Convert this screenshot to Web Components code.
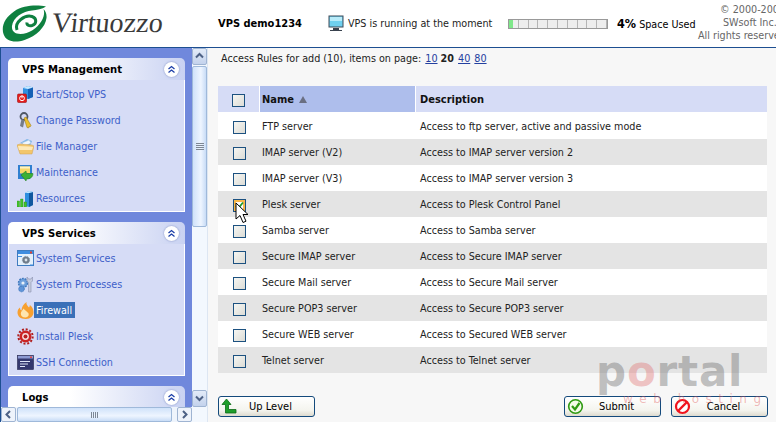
<!DOCTYPE html>
<html>
<head>
<meta charset="utf-8">
<title>Virtuozzo</title>
<style>
  html, body { margin: 0; height: 100%; overflow: hidden; background: #fff; }
  body { width: 776px; height: 422px; font: 10.7px "DejaVu Sans Condensed", "Liberation Sans", sans-serif; color: #000; }
</style>
</head>
<body>
<vz-app></vz-app>
<script>
const ICONS = {
  power: `<path d="M6 2l5-2 5 1.500V11l-5 2-5-1z" fill="#2f8fe0"/><path d="M11 2.500l5-1V11l-5 2z" fill="#1560b5"/><path d="M6 2l5-2 5 1.500-5 1.500z" fill="#c7e8ff"/><rect x=".5" y="8" width="9" height="8.500" rx="1" fill="#e41c1c" stroke="#a01010" stroke-width=".6"/><circle cx="5" cy="12.300" r="2.400" fill="none" stroke="#fff"/><path d="M5 9.500v2.800" stroke="#fff"/>`,
  keys: `<circle cx="7" cy="4.500" r="3.500" fill="none" stroke="#4f5866" stroke-width="1.800"/><path d="M4.500 7L3 14l3 1.500 1.500-7z" fill="#767d88"/><path d="M7 6l2-1 5 8.500-1 1.500-1-.5-.5 1.500-1.500-.5z" fill="#eabf2e" stroke="#94700e" stroke-width=".5"/>`,
  folder: `<path d="M3 5l7-4 5 2-2 5z" fill="#7fb6e8"/><path d="M5 5l7-3 2 3-6 3z" fill="#eef6ff" stroke="#a8c4dc" stroke-width=".5"/><path d="M0 7l3-1 12 1 2 1-2 8H3z" fill="#f2c66c" stroke="#d0a050" stroke-width=".5"/><path d="M1 8l12 .5 3 .5-1 3H2z" fill="#fde9b8"/>`,
  maint: `<path d="M1 1h14v10l-2 4H1z" fill="#2f7fd0"/><path d="M3 2.500h10v7H3z" fill="#f7d868"/><path d="M3 2.500h10v2H3z" fill="#fff3c0"/><path d="M4 11l5-4 .5 2.500H16c0 3-2 5.500-6.500 5.500l-.5 2z" fill="#3cb035" stroke="#1b7a1b" stroke-width=".5"/>`,
  chart: `<path d="M8 3l4-2 4 1v13l-4 2-4-1z" fill="#2f8fe0"/><path d="M12 3l4-1v13l-4 2z" fill="#10589f"/><path d="M8 3l4-2 4 1-4 1z" fill="#c7e8ff"/><path d="M0 11h2.500v6H0zM3.500 9H6v8H3.500zM7 12h2.500v5H7z" fill="#43c22c" stroke="#2a9018" stroke-width=".4"/>`,
  window: `<rect x=".5" y=".5" width="16" height="15" fill="#e4f0fb" stroke="#3f7cc0"/><rect x="1" y="1" width="15" height="3" fill="#3f8de0"/><rect x="13" y="1.500" width="2" height="2" fill="#e04030"/><circle cx="9" cy="10" r="3.600" fill="#6f7c8a" stroke="#8a97a5" stroke-dasharray="1.500 1"/><circle cx="9" cy="10" r="1.400" fill="#dde4ea"/><path d="M1 6.500h4M13 15h3" stroke="#3f8de0"/>`,
  procs: `<circle cx="6" cy="7" r="4.500" fill="#6fa0dc" stroke="#3f78bc" stroke-width="1.500" stroke-dasharray="1.800 1"/><circle cx="6" cy="7" r="1.600" fill="#e8f0f8"/><circle cx="4.500" cy="13" r="2.800" fill="#5f94d8" stroke="#3f78bc" stroke-dasharray="1.200 .8"/><path d="M10 1v4l1.500 1.500V16h2.500V6.500L15.500 5V1L14 3h-2.500z" fill="#c5cbdd" stroke="#8990b0" stroke-width=".6"/>`,
  flame: `<path d="M8.500 17c-5 0-8-2.800-8-6.500 0-2.300 1-4 2.500-5 0 1.500.5 2.500 1.500 3C4.500 5 6.500 2 9.500 0c-.5 2.500 1 3.800 2.500 5.500.5-.5.8-1.500.8-2.500 2.200 1.500 3.700 4.300 3.700 7 0 4-3 7-7.500 7z" fill="#f7a030"/><path d="M8.500 15.500c-3 0-4.700-1.700-4.700-3.800 0-2.200 1.700-3.400 2.900-5.200.6 1.700 3.500 2.900 4.600 4.600 1.200 2.300-.4 4.400-2.800 4.400z" fill="#fde6b0"/>`,
  gear: `<circle cx="8.500" cy="8.500" r="6" fill="#cc2424"/><circle cx="8.500" cy="8.500" r="7.200" fill="none" stroke="#b01c1c" stroke-width="2" stroke-dasharray="2 1.770"/><circle cx="8.500" cy="8.500" r="3.400" fill="#f8e0e0"/><circle cx="8.500" cy="8.500" r="2" fill="#b82020"/>`,
  term: `<rect x=".5" y="1.500" width="16" height="14" fill="#34386e" stroke="#23264f" stroke-width=".6"/><rect x="1" y="2" width="15" height="2.500" fill="#8d9ad2"/><rect x="13" y="2.500" width="2" height="1.500" fill="#e04848"/><path d="M3 7.500h10M3 10h8M3 12.500h5" stroke="#dfe6f8"/>`
};

const itemTemplate = document.createElement('template');
itemTemplate.innerHTML = `
  <style>
    :host { display: flex; align-items: center; height: 26px; color: #3d5fc9; }
    svg { width: 17px; height: 17px; flex: none; margin-left: 8px; }
    span { padding: 2px 3px 0 2px; line-height: 14px; }
    :host([active]) span { background: #3a70b8; color: #fff; }
  </style>
  <svg viewBox="0 0 17 17"></svg><span><slot></slot></span>
`;
class VzItem extends HTMLElement {
  constructor() {
    super();
    this._shadowRoot = this.attachShadow({mode: 'open'});
    this._shadowRoot.appendChild(itemTemplate.content.cloneNode(true));
  }
  connectedCallback() {
    this._shadowRoot.querySelector('svg').innerHTML = ICONS[this.getAttribute('icon')];
  }
}
customElements.define('vz-item', VzItem);

const panelTemplate = document.createElement('template');
panelTemplate.innerHTML = `
  <style>
    :host { display: block; margin-bottom: 10px; flex: none; }
    .title { height: 22px; display: flex; align-items: center; justify-content: space-between; padding: 0 6px 0 14px; border-radius: 5px 5px 0 0; background: linear-gradient(90deg, #fff 35%, #c9d2f2); font-weight: bold; font-size: 11.200px; }
    #name { padding-bottom: 1px; padding-top: 1px; }
    .toggle { width: 15px; height: 15px; border-radius: 50%; background: #fff; box-shadow: 0 0 2px #7a8ac0; }
    svg { display: block; }
    .body { background: #d6dcf6; border: 1px solid #fff; border-top: 0; padding: 1px 0 0; }
  </style>
  <div class="title">
    <span id="name"></span>
    <div class="toggle"><svg width="15" height="15" viewBox="0 0 15 15"><path d="M4.500 7l3-2.500 3 2.500M4.500 10.500l3-2.500 3 2.500" fill="none" stroke="#1d3fa8" stroke-width="1.300"/></svg></div>
  </div>
  <div class="body"><slot></slot></div>
`;
class VzPanel extends HTMLElement {
  constructor() {
    super();
    this._shadowRoot = this.attachShadow({mode: 'open'});
    this._shadowRoot.appendChild(panelTemplate.content.cloneNode(true));
  }
  connectedCallback() {
    this._shadowRoot.querySelector('#name').textContent = this.getAttribute('name');
  }
}
customElements.define('vz-panel', VzPanel);

const scrollTemplate = document.createElement('template');
scrollTemplate.innerHTML = `
  <style>
    :host { display: flex; flex: none; background: #f3f8fe; gap: 1px; }
    :host([dir-v]) { flex-direction: column; width: 15px; height: 359px; }
    :host([dir-h]) { flex-direction: row; height: 15px; background: #eef4fc; }
    .btn { flex: none; width: 15px; height: 17px; box-sizing: border-box; border: 1px solid #9fb4d2; border-radius: 2px; background: linear-gradient(#e3ebf8, #c3d2ec); }
    :host([dir-h]) .btn { height: 15px; background: #eef3fb; }
    .thumb { box-sizing: border-box; border: 1px solid #9fb9da; border-radius: 2px; display: flex; align-items: center; justify-content: center; }
    :host([dir-v]) .thumb { height: 161px; background: linear-gradient(90deg, #d0e2fa, #eef5ff 60%, #c8dcf6); }
    :host([dir-h]) .thumb { width: 155px; background: linear-gradient(#d0e2fa, #eef5ff 60%, #c8dcf6); }
    .track { flex: 1; }
    svg { display: block; }
  </style>
  <div class="btn"><svg width="13" height="14" viewBox="0 0 13 14"><path id="a" fill="none" stroke="#4d6185" stroke-width="2"/></svg></div>
  <div class="thumb"><svg width="8" height="8" viewBox="0 0 8 8"><path id="g" fill="none" stroke="#7d8794"/></svg></div>
  <div class="track"></div>
  <div class="btn"><svg width="13" height="14" viewBox="0 0 13 14"><path id="b" fill="none" stroke="#4d6185" stroke-width="2"/></svg></div>
`;
class VzScrollbar extends HTMLElement {
  constructor() {
    super();
    this._shadowRoot = this.attachShadow({mode: 'open'});
    this._shadowRoot.appendChild(scrollTemplate.content.cloneNode(true));
  }
  connectedCallback() {
    const vertical = this.hasAttribute('dir-v');
    const root = this._shadowRoot;
    root.querySelector('#a').setAttribute('d', vertical ? 'M3 8.500l3.500-3.500 3.500 3.500' : 'M8 3l-3.500 3.500 3.500 3.500');
    root.querySelector('#b').setAttribute('d', vertical ? 'M3 5.500l3.500 3.500 3.500-3.500' : 'M5 3l3.500 3.500-3.500 3.500');
    root.querySelector('#g').setAttribute('d', vertical ? 'M0 .5h8M0 2.500h8M0 4.500h8M0 6.500h8' : 'M.5 1v6M2.500 1v6M4.500 1v6M6.500 1v6');
  }
}
customElements.define('vz-scrollbar', VzScrollbar);

const checkTemplate = document.createElement('template');
checkTemplate.innerHTML = `
  <style>
    :host { display: block; width: 13px; height: 13px; box-sizing: border-box; border: 1px solid #1c5180; background: linear-gradient(135deg, #f6f6f2, #dcdcd6); position: relative; }
    :host([hot]) { background: #fff; box-shadow: inset 0 0 0 2px #f8b84a; }
    svg { display: none; position: absolute; left: 1px; top: 1px; }
    :host([hot]) svg { display: block; }
  </style>
  <svg width="9" height="9" viewBox="0 0 9 9"><path d="M1 4.500l2.500 2.500L8 1.500" fill="none" stroke="#1d9a2c" stroke-width="1.800"/></svg>
`;
class VzCheck extends HTMLElement {
  constructor() {
    super();
    this._shadowRoot = this.attachShadow({mode: 'open'});
    this._shadowRoot.appendChild(checkTemplate.content.cloneNode(true));
  }
}
customElements.define('vz-check', VzCheck);

const buttonTemplate = document.createElement('template');
buttonTemplate.innerHTML = `
  <style>
    :host { display: flex; align-items: center; width: 97px; height: 21px; box-sizing: border-box; border: 1px solid #144a7c; border-radius: 3px; background: linear-gradient(#fff, #f4f4ee 70%, #dedbcf); flex: none; position: relative; }
    svg { position: absolute; left: 2px; top: 1px; }
    span { flex: 1; text-align: center; padding-left: 8px; font-size: 11px; }
  </style>
  <svg width="17" height="17" viewBox="0 0 17 17"></svg><span><slot></slot></span>
`;
const BUTTON_ICONS = {
  up: `<path d="M1 6.500L5.500 1 10 6.500H7.500V11.500H15V15H4.500V6.500z" fill="#1f9e2a" stroke="#0d6b15" stroke-width=".8"/>`,
  ok: `<circle cx="8.500" cy="8.500" r="6.800" fill="#f4fbe8" stroke="#2f9a12" stroke-width="1.600"/><path d="M5 8l3 3.500L12.500 5" fill="none" stroke="#2f9a12" stroke-width="2.200"/>`,
  no: `<circle cx="8.500" cy="8.500" r="6.500" fill="#fff" stroke="#f0141e" stroke-width="2.200"/><path d="M4 13L13 4" stroke="#f0141e" stroke-width="2.400"/>`
};
class VzButton extends HTMLElement {
  constructor() {
    super();
    this._shadowRoot = this.attachShadow({mode: 'open'});
    this._shadowRoot.appendChild(buttonTemplate.content.cloneNode(true));
  }
  connectedCallback() {
    this._shadowRoot.querySelector('svg').innerHTML = BUTTON_ICONS[this.getAttribute('icon')];
  }
}
customElements.define('vz-button', VzButton);

const headerTemplate = document.createElement('template');
headerTemplate.innerHTML = `
  <style>
    :host { display: flex; align-items: center; height: 47px; border-bottom: 1px solid #1d4f91; box-sizing: content-box; overflow: hidden; background: #fff; }
    .logo { display: flex; align-items: center; width: 218px; flex: none; padding-left: 2px; box-sizing: border-box; }
    .logo svg { flex: none; }
    .brand { font: 28.200px "Liberation Serif", serif; color: #3a3a3a; margin-left: 4px; transform: skewX(-6deg); margin-top: -1px; }
    .vps { width: 110px; flex: none; font-weight: bold; font-size: 11px; }
    .status { width: 180px; flex: none; display: flex; align-items: center; gap: 4px; color: #222; }
    .bar { display: grid; grid-template-columns: repeat(10, 1fr); width: 100px; height: 10px; flex: none; border: 1px solid #999; box-sizing: border-box; background: #eee; }
    .bar i { border-right: 1px solid #b5b5b5; }
    .bar i:first-child { background: linear-gradient(90deg, #7fe88a 50%, #eee 50%); }
    .used { margin-left: 9px; width: 81px; flex: none; white-space: nowrap; }
    .used b { font-size: 12.500px; }
    .copy { flex: none; color: #666; line-height: 13px; white-space: nowrap; margin-top: -3px; }
    .copy div:nth-child(1) { padding-left: 22px; }
    .copy div:nth-child(2) { padding-left: 25px; }
  </style>
  <div class="logo">
    <svg width="46" height="40" viewBox="0 0 46 40">
      <path fill-rule="evenodd" d="M44 2.500c-8-1.500-22-2-32 5C3 13.500-1 22 1.500 30c2.500 8 12 9 21 6 12-4 21-13 22-22 .4-4-1-7-3-9 1 3 1 7-2 12-4 7-13 13-21 13-6 0-9-3-8.500-8C11 13.500 21 7 30 6.500c5-.3 10-1.500 14-4z" fill="#0f8040"/>
      <path d="M15 26C12 18 23 10.500 30 12.500c5 1.500 5 7.500 0 9-3 .8-5.500-.5-5-3" fill="none" stroke="#0f8040" stroke-width="3"/>
    </svg>
    <span class="brand">Virtuozzo</span>
  </div>
  <div class="vps">VPS demo1234</div>
  <div class="status">
    <svg width="16" height="17" viewBox="0 0 16 17"><rect x="1" y="1" width="14" height="11" fill="#6fd0ef" stroke="#3e4a58"/><rect x="2" y="2" width="12" height="4" fill="#b8ecfa"/><path d="M5 13h6v2h3v1H2v-1h3z" fill="#39424e"/></svg>
    <span>VPS is running at the moment</span>
  </div>
  <div class="bar"><i></i><i></i><i></i><i></i><i></i><i></i><i></i><i></i><i></i><i></i></div>
  <div class="used"><b>4%</b> Space Used</div>
  <div class="copy"><div>© 2000-2006</div><div>SWsoft Inc.</div><div>All rights reserved</div></div>
`;
class VzHeader extends HTMLElement {
  constructor() {
    super();
    this._shadowRoot = this.attachShadow({mode: 'open'});
    this._shadowRoot.appendChild(headerTemplate.content.cloneNode(true));
  }
}
customElements.define('vz-header', VzHeader);

const RULES = [
  ['FTP server', 'Access to ftp server, active and passive mode'],
  ['IMAP server (V2)', 'Access to IMAP server version 2'],
  ['IMAP server (V3)', 'Access to IMAP server version 3'],
  ['Plesk server', 'Access to Plesk Control Panel'],
  ['Samba server', 'Access to Samba server'],
  ['Secure IMAP server', 'Access to Secure IMAP server'],
  ['Secure Mail server', 'Access to Secure Mail server'],
  ['Secure POP3 server', 'Access to Secure POP3 server'],
  ['Secure WEB server', 'Access to Secured WEB server'],
  ['Telnet server', 'Access to Telnet server']
];

const tableTemplate = document.createElement('template');
tableTemplate.innerHTML = `
  <style>
    :host { display: block; width: 549px; background: #fff; color: #222; }
    .row { display: grid; grid-template-columns: 41px 157px 351px; height: 26px; align-items: center; }
    .head { height: 26px; margin-bottom: 1px; align-items: stretch; font-weight: bold; font-size: 11px; color: #111; }
    .head > div { display: flex; align-items: center; background: #d6dcf6; }
    .head .name { background: #aebeec; border-left: 1px solid #fff; border-right: 1px solid #fff; box-sizing: border-box; padding-left: 2px; }
    .head .desc { padding-left: 4px; }
    .head .box { padding: 2px 0 0 14px; }
    .arrow { display: inline-block; margin-left: 5px; width: 0; height: 0; border: 4px solid transparent; border-bottom: 7px solid #6a6f82; border-top: 0; }
    .cell-box { padding: 2px 0 0 15px; position: relative; }
    .cell-name { padding-left: 3px; }
    .cell-desc { padding-left: 4px; }
    .cursor { position: absolute; left: 17px; top: 5px; }
  </style>
  <div class="row head">
    <div class="box"><vz-check></vz-check></div>
    <div class="name">Name<span class="arrow"></span></div>
    <div class="desc">Description</div>
  </div>
  <div id="rows"></div>
`;
class VzRules extends HTMLElement {
  constructor() {
    super();
    this._shadowRoot = this.attachShadow({mode: 'open'});
    this._shadowRoot.appendChild(tableTemplate.content.cloneNode(true));
    this._rowsElm = this._shadowRoot.querySelector('#rows');
  }
  connectedCallback() {
    this._render();
  }
  _render() {
    this._rowsElm.innerHTML = RULES.map((rule, index) => `
      <div class="row" style="background:${index % 2 ? '#e4e4e4' : '#fff'}">
        <div class="cell-box"><vz-check ${index === 3 ? 'hot' : ''}></vz-check>${index === 3 ? `
          <svg class="cursor" width="14" height="22" viewBox="0 0 14 22"><path d="M1 1v16l4-3.500 3 7 3-1.300-3-6.700h5z" fill="#fff" stroke="#000"/></svg>` : ''}</div>
        <div class="cell-name">${rule[0]}</div>
        <div class="cell-desc">${rule[1]}</div>
      </div>`).join('');
  }
}
customElements.define('vz-rules', VzRules);

const appTemplate = document.createElement('template');
appTemplate.innerHTML = `
  <style>
    :host { display: block; width: 776px; height: 422px; overflow: hidden; position: relative; }
    .page { display: flex; height: 374px; }
    .side { width: 192px; flex: none; display: flex; flex-direction: column; background: #7088dc; border-left: 1px solid #1d4f91; box-sizing: border-box; }
    .panels { flex: 1; overflow: hidden; padding: 10px 7px 0 7px; display: flex; flex-direction: column; }
    .vscroll { background: #f3f8fe; width: 16px; flex: none; border-right: 1px solid #dde6f2; box-sizing: border-box; }
    .main { flex: 1; background: #f7f7f7; padding: 3px 0 0 10px; display: flex; flex-direction: column; }
    .pager { height: 35px; line-height: 15px; padding-left: 3px; color: #222; }
    .pager a { color: #2440a0; text-decoration: underline; margin-left: 1px; }
    .actions { display: flex; width: 550px; margin-top: 23px; }
    .actions .right { margin-left: auto; display: flex; gap: 10px; }
    .mark { position: absolute; left: 596px; top: 347px; width: 170px; pointer-events: none; font-family: "DejaVu Sans", sans-serif; }
    .mark .big { font-size: 42px; font-weight: bold; line-height: 50px; letter-spacing: .8px; color: rgba(110,110,110,.42); }
    .mark .big b { color: rgba(225,110,110,.38); }
    .mark .small { font-size: 12px; letter-spacing: 6.500px; color: rgba(220,80,80,.4); margin: -5px 0 0 27px; white-space: nowrap; }
  </style>
  <vz-header></vz-header>
  <div class="page">
    <div class="side">
      <div class="panels">
        <vz-panel name="VPS Management">
          <vz-item icon="power">Start/Stop VPS</vz-item>
          <vz-item icon="keys">Change Password</vz-item>
          <vz-item icon="folder">File Manager</vz-item>
          <vz-item icon="maint">Maintenance</vz-item>
          <vz-item icon="chart">Resources</vz-item>
        </vz-panel>
        <vz-panel name="VPS Services">
          <vz-item icon="window">System Services</vz-item>
          <vz-item icon="procs">System Processes</vz-item>
          <vz-item icon="flame" active>Firewall</vz-item>
          <vz-item icon="gear">Install Plesk</vz-item>
          <vz-item icon="term">SSH Connection</vz-item>
        </vz-panel>
        <vz-panel name="Logs"></vz-panel>
      </div>
      <vz-scrollbar dir-h></vz-scrollbar>
    </div>
    <div class="vscroll"><vz-scrollbar dir-v></vz-scrollbar></div>
    <div class="main">
      <div class="pager">Access Rules for add (10), items on page: <a>10</a> <b>20</b> <a>40</a> <a>80</a></div>
      <vz-rules></vz-rules>
      <div class="actions">
        <vz-button icon="up">Up Level</vz-button>
        <div class="right">
          <vz-button icon="ok">Submit</vz-button>
          <vz-button icon="no">Cancel</vz-button>
        </div>
      </div>
    </div>
  </div>
  <div class="mark"><div class="big">p<b>o</b>rtal</div><div class="small">web hosting</div></div>
`;
class VzApp extends HTMLElement {
  constructor() {
    super();
    this._shadowRoot = this.attachShadow({mode: 'open'});
    this._shadowRoot.appendChild(appTemplate.content.cloneNode(true));
  }
}
customElements.define('vz-app', VzApp);
</script>
</body>
</html>
